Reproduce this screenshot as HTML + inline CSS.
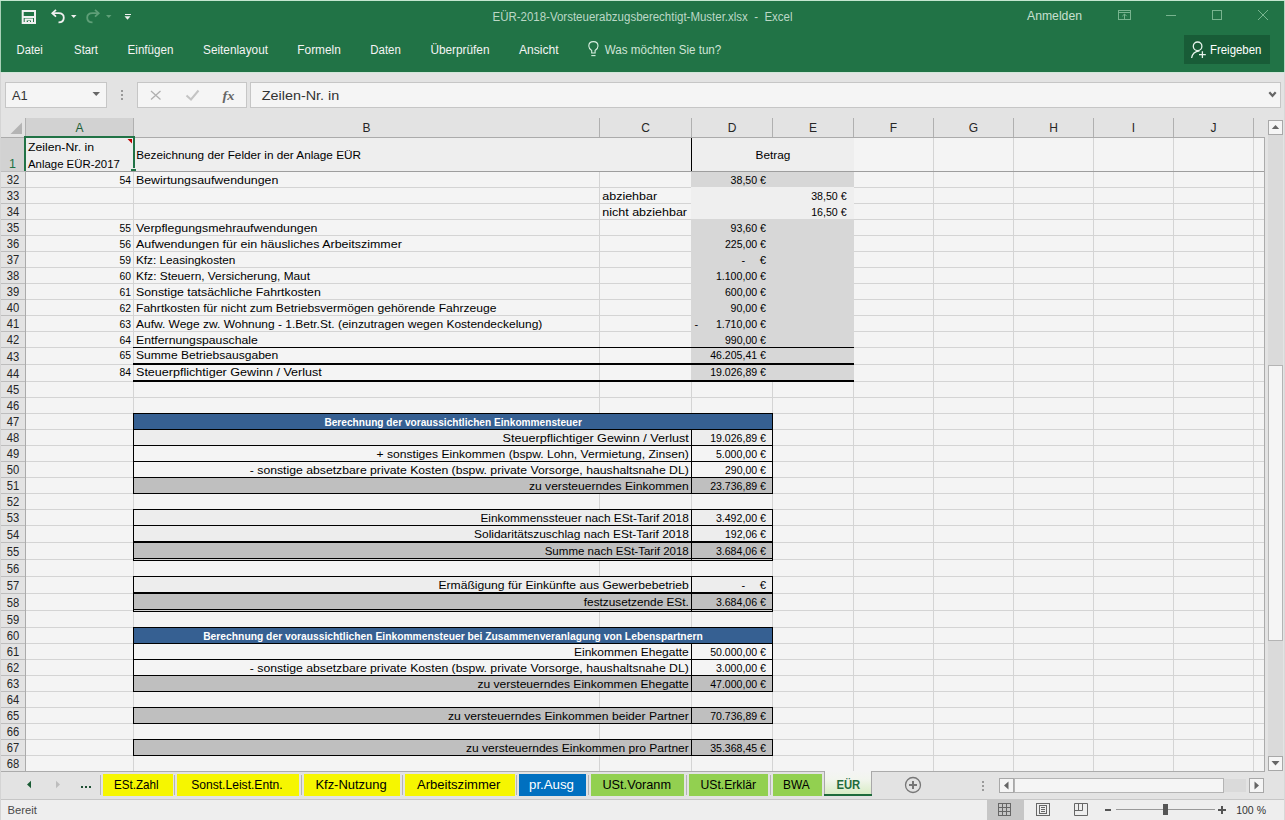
<!DOCTYPE html>
<html><head><meta charset="utf-8"><title>Excel</title>
<style>
html,body{margin:0;padding:0;width:1285px;height:820px;overflow:hidden;background:#e3e3e3;}
svg{display:block;font-family:"Liberation Sans", sans-serif;}
rect{shape-rendering:crispEdges;}
</style></head><body>
<svg width="1285" height="820" viewBox="0 0 1285 820">
<rect x="0" y="0" width="1285" height="820" fill="#e3e3e3" />
<rect x="0" y="0" width="1285" height="72" fill="#217346" />
<text x="492.5" y="21" font-size="12" fill="#bcd8c6" textLength="300" lengthAdjust="spacingAndGlyphs" xml:space="preserve">EÜR-2018-Vorsteuerabzugsberechtigt-Muster.xlsx  -  Excel</text>
<text x="1027" y="20" font-size="12" fill="#c8e0d0" textLength="55" lengthAdjust="spacingAndGlyphs" >Anmelden</text>
<text x="16.6" y="54" font-size="12" fill="#f4f4f4" textLength="26.1" lengthAdjust="spacingAndGlyphs" >Datei</text>
<text x="74.1" y="54" font-size="12" fill="#f4f4f4" textLength="23.9" lengthAdjust="spacingAndGlyphs" >Start</text>
<text x="127.6" y="54" font-size="12" fill="#f4f4f4" textLength="45.8" lengthAdjust="spacingAndGlyphs" >Einfügen</text>
<text x="203" y="54" font-size="12" fill="#f4f4f4" textLength="65" lengthAdjust="spacingAndGlyphs" >Seitenlayout</text>
<text x="297.3" y="54" font-size="12" fill="#f4f4f4" textLength="43.5" lengthAdjust="spacingAndGlyphs" >Formeln</text>
<text x="370.3" y="54" font-size="12" fill="#f4f4f4" textLength="30.5" lengthAdjust="spacingAndGlyphs" >Daten</text>
<text x="430.4" y="54" font-size="12" fill="#f4f4f4" textLength="59.1" lengthAdjust="spacingAndGlyphs" >Überprüfen</text>
<text x="519" y="54" font-size="12" fill="#f4f4f4" textLength="39.7" lengthAdjust="spacingAndGlyphs" >Ansicht</text>
<text x="604.8" y="54" font-size="12" fill="#cfe3d6" textLength="116.5" lengthAdjust="spacingAndGlyphs" >Was möchten Sie tun?</text>
<rect x="1184" y="35" width="86" height="29" fill="#185c37" />
<text x="1210" y="54" font-size="12" fill="#ffffff" textLength="51.4" lengthAdjust="spacingAndGlyphs" >Freigeben</text>
<rect x="0" y="72" width="1285" height="46" fill="#e3e3e3" />
<rect x="0" y="72" width="1285" height="1" fill="#d2e6d9" />
<rect x="5.5" y="82.5" width="101" height="25" fill="#f5f5f5" stroke="#c6c6c6" stroke-width="1"/>
<text x="12" y="100" font-size="12.5" fill="#333333" textLength="15.7" lengthAdjust="spacingAndGlyphs" >A1</text>
<rect x="137.5" y="82.5" width="109" height="25" fill="#f5f5f5" stroke="#c6c6c6" stroke-width="1"/>
<rect x="250.5" y="82.5" width="1030" height="25" fill="#f5f5f5" stroke="#c6c6c6" stroke-width="1"/>
<text x="261.8" y="100" font-size="12.5" fill="#333333" textLength="77.5" lengthAdjust="spacingAndGlyphs" >Zeilen-Nr. in</text>
<rect x="25" y="137" width="1239" height="634" fill="#f4f4f4" />
<rect x="25" y="171" width="1239" height="1" fill="#d4d4d4" />
<rect x="25" y="187" width="1239" height="1" fill="#d4d4d4" />
<rect x="25" y="203" width="1239" height="1" fill="#d4d4d4" />
<rect x="25" y="219" width="1239" height="1" fill="#d4d4d4" />
<rect x="25" y="235" width="1239" height="1" fill="#d4d4d4" />
<rect x="25" y="251" width="1239" height="1" fill="#d4d4d4" />
<rect x="25" y="267" width="1239" height="1" fill="#d4d4d4" />
<rect x="25" y="283" width="1239" height="1" fill="#d4d4d4" />
<rect x="25" y="299" width="1239" height="1" fill="#d4d4d4" />
<rect x="25" y="315" width="1239" height="1" fill="#d4d4d4" />
<rect x="25" y="331" width="1239" height="1" fill="#d4d4d4" />
<rect x="25" y="347" width="1239" height="1" fill="#d4d4d4" />
<rect x="25" y="364" width="1239" height="1" fill="#d4d4d4" />
<rect x="25" y="381" width="1239" height="1" fill="#d4d4d4" />
<rect x="25" y="397" width="1239" height="1" fill="#d4d4d4" />
<rect x="25" y="413" width="1239" height="1" fill="#d4d4d4" />
<rect x="25" y="429" width="1239" height="1" fill="#d4d4d4" />
<rect x="25" y="445" width="1239" height="1" fill="#d4d4d4" />
<rect x="25" y="461" width="1239" height="1" fill="#d4d4d4" />
<rect x="25" y="477" width="1239" height="1" fill="#d4d4d4" />
<rect x="25" y="493" width="1239" height="1" fill="#d4d4d4" />
<rect x="25" y="509" width="1239" height="1" fill="#d4d4d4" />
<rect x="25" y="525" width="1239" height="1" fill="#d4d4d4" />
<rect x="25" y="542" width="1239" height="1" fill="#d4d4d4" />
<rect x="25" y="559" width="1239" height="1" fill="#d4d4d4" />
<rect x="25" y="576" width="1239" height="1" fill="#d4d4d4" />
<rect x="25" y="593" width="1239" height="1" fill="#d4d4d4" />
<rect x="25" y="610" width="1239" height="1" fill="#d4d4d4" />
<rect x="25" y="627" width="1239" height="1" fill="#d4d4d4" />
<rect x="25" y="643" width="1239" height="1" fill="#d4d4d4" />
<rect x="25" y="659" width="1239" height="1" fill="#d4d4d4" />
<rect x="25" y="675" width="1239" height="1" fill="#d4d4d4" />
<rect x="25" y="691" width="1239" height="1" fill="#d4d4d4" />
<rect x="25" y="707" width="1239" height="1" fill="#d4d4d4" />
<rect x="25" y="723" width="1239" height="1" fill="#d4d4d4" />
<rect x="25" y="739" width="1239" height="1" fill="#d4d4d4" />
<rect x="25" y="755" width="1239" height="1" fill="#d4d4d4" />
<rect x="25" y="771" width="1239" height="1" fill="#d4d4d4" />
<rect x="25" y="137" width="1" height="634" fill="#d4d4d4" />
<rect x="133" y="137" width="1" height="634" fill="#d4d4d4" />
<rect x="599" y="137" width="1" height="634" fill="#d4d4d4" />
<rect x="691" y="137" width="1" height="634" fill="#d4d4d4" />
<rect x="772" y="137" width="1" height="634" fill="#d4d4d4" />
<rect x="853" y="137" width="1" height="634" fill="#d4d4d4" />
<rect x="933" y="137" width="1" height="634" fill="#d4d4d4" />
<rect x="1013" y="137" width="1" height="634" fill="#d4d4d4" />
<rect x="1093" y="137" width="1" height="634" fill="#d4d4d4" />
<rect x="1173" y="137" width="1" height="634" fill="#d4d4d4" />
<rect x="1253" y="137" width="1" height="634" fill="#d4d4d4" />
<rect x="25" y="137" width="829" height="34" fill="#eeeeee" />
<rect x="691" y="171" width="163" height="16" fill="#d7d7d7" />
<rect x="691" y="187" width="163" height="32" fill="#efefef" />
<rect x="691" y="219" width="163" height="162" fill="#d7d7d7" />
<rect x="133" y="413" width="640" height="16" fill="#366092" />
<rect x="133" y="429" width="640" height="16" fill="#ededed" />
<rect x="133" y="477" width="640" height="16" fill="#bfbfbf" />
<rect x="133" y="509" width="640" height="33" fill="#ededed" />
<rect x="133" y="542" width="640" height="17" fill="#bfbfbf" />
<rect x="133" y="576" width="640" height="17" fill="#ededed" />
<rect x="133" y="593" width="640" height="17" fill="#bfbfbf" />
<rect x="133" y="445" width="640" height="32" fill="#f4f4f4" />
<rect x="133" y="643" width="640" height="32" fill="#f4f4f4" />
<rect x="133" y="627" width="640" height="16" fill="#366092" />
<rect x="133" y="675" width="640" height="16" fill="#bfbfbf" />
<rect x="133" y="707" width="640" height="16" fill="#bfbfbf" />
<rect x="133" y="739" width="640" height="16" fill="#bfbfbf" />
<rect x="691" y="137" width="1" height="34" fill="#000000" />
<rect x="133" y="347" width="721" height="1" fill="#000000" />
<rect x="133" y="363" width="721" height="2" fill="#000000" />
<rect x="133" y="380" width="721" height="2" fill="#000000" />
<rect x="133" y="413" width="640" height="1" fill="#000000" />
<rect x="133" y="429" width="640" height="1" fill="#000000" />
<rect x="133" y="413" width="1" height="17" fill="#000000" />
<rect x="772" y="413" width="1" height="17" fill="#000000" />
<rect x="133" y="429" width="640" height="1" fill="#000000" />
<rect x="133" y="445" width="640" height="1" fill="#000000" />
<rect x="133" y="429" width="1" height="17" fill="#000000" />
<rect x="772" y="429" width="1" height="17" fill="#000000" />
<rect x="133" y="445" width="640" height="1" fill="#000000" />
<rect x="133" y="461" width="640" height="1" fill="#000000" />
<rect x="133" y="445" width="1" height="17" fill="#000000" />
<rect x="772" y="445" width="1" height="17" fill="#000000" />
<rect x="133" y="461" width="640" height="1" fill="#000000" />
<rect x="133" y="477" width="640" height="1" fill="#000000" />
<rect x="133" y="461" width="1" height="17" fill="#000000" />
<rect x="772" y="461" width="1" height="17" fill="#000000" />
<rect x="133" y="477" width="640" height="1" fill="#000000" />
<rect x="133" y="493" width="640" height="1" fill="#000000" />
<rect x="133" y="477" width="1" height="17" fill="#000000" />
<rect x="772" y="477" width="1" height="17" fill="#000000" />
<rect x="133" y="509" width="640" height="1" fill="#000000" />
<rect x="133" y="525" width="640" height="1" fill="#000000" />
<rect x="133" y="509" width="1" height="17" fill="#000000" />
<rect x="772" y="509" width="1" height="17" fill="#000000" />
<rect x="133" y="525" width="640" height="1" fill="#000000" />
<rect x="133" y="542" width="640" height="1" fill="#000000" />
<rect x="133" y="525" width="1" height="18" fill="#000000" />
<rect x="772" y="525" width="1" height="18" fill="#000000" />
<rect x="133" y="576" width="640" height="1" fill="#000000" />
<rect x="133" y="593" width="640" height="1" fill="#000000" />
<rect x="133" y="576" width="1" height="18" fill="#000000" />
<rect x="772" y="576" width="1" height="18" fill="#000000" />
<rect x="133" y="627" width="640" height="1" fill="#000000" />
<rect x="133" y="643" width="640" height="1" fill="#000000" />
<rect x="133" y="627" width="1" height="17" fill="#000000" />
<rect x="772" y="627" width="1" height="17" fill="#000000" />
<rect x="133" y="643" width="640" height="1" fill="#000000" />
<rect x="133" y="659" width="640" height="1" fill="#000000" />
<rect x="133" y="643" width="1" height="17" fill="#000000" />
<rect x="772" y="643" width="1" height="17" fill="#000000" />
<rect x="133" y="659" width="640" height="1" fill="#000000" />
<rect x="133" y="675" width="640" height="1" fill="#000000" />
<rect x="133" y="659" width="1" height="17" fill="#000000" />
<rect x="772" y="659" width="1" height="17" fill="#000000" />
<rect x="133" y="675" width="640" height="1" fill="#000000" />
<rect x="133" y="691" width="640" height="1" fill="#000000" />
<rect x="133" y="675" width="1" height="17" fill="#000000" />
<rect x="772" y="675" width="1" height="17" fill="#000000" />
<rect x="133" y="707" width="640" height="1" fill="#000000" />
<rect x="133" y="723" width="640" height="1" fill="#000000" />
<rect x="133" y="707" width="1" height="17" fill="#000000" />
<rect x="772" y="707" width="1" height="17" fill="#000000" />
<rect x="133" y="739" width="640" height="1" fill="#000000" />
<rect x="133" y="755" width="640" height="1" fill="#000000" />
<rect x="133" y="739" width="1" height="17" fill="#000000" />
<rect x="772" y="739" width="1" height="17" fill="#000000" />
<rect x="133" y="541" width="640" height="2" fill="#000000" />
<rect x="133" y="558" width="640" height="1" fill="#000000" />
<rect x="133" y="560" width="640" height="1" fill="#000000" />
<rect x="133" y="542" width="1" height="19" fill="#000000" />
<rect x="691" y="542" width="1" height="19" fill="#000000" />
<rect x="772" y="542" width="1" height="19" fill="#000000" />
<rect x="133" y="592" width="640" height="2" fill="#000000" />
<rect x="133" y="609" width="640" height="1" fill="#000000" />
<rect x="133" y="611" width="640" height="1" fill="#000000" />
<rect x="133" y="576" width="1" height="36" fill="#000000" />
<rect x="691" y="576" width="1" height="36" fill="#000000" />
<rect x="772" y="576" width="1" height="36" fill="#000000" />
<rect x="691" y="429" width="1" height="17" fill="#000000" />
<rect x="691" y="445" width="1" height="17" fill="#000000" />
<rect x="691" y="461" width="1" height="17" fill="#000000" />
<rect x="691" y="477" width="1" height="17" fill="#000000" />
<rect x="691" y="509" width="1" height="17" fill="#000000" />
<rect x="691" y="525" width="1" height="18" fill="#000000" />
<rect x="691" y="542" width="1" height="18" fill="#000000" />
<rect x="691" y="576" width="1" height="18" fill="#000000" />
<rect x="691" y="593" width="1" height="18" fill="#000000" />
<rect x="691" y="643" width="1" height="17" fill="#000000" />
<rect x="691" y="659" width="1" height="17" fill="#000000" />
<rect x="691" y="675" width="1" height="17" fill="#000000" />
<rect x="691" y="707" width="1" height="17" fill="#000000" />
<rect x="691" y="739" width="1" height="17" fill="#000000" />
<rect x="0" y="171" width="1264" height="1" fill="#9e9e9e" />
<rect x="0" y="118" width="1264" height="19" fill="#e3e3e3" />
<rect x="25" y="118" width="108" height="19" fill="#d2d2d2" />
<rect x="133" y="118" width="1" height="19" fill="#b0b0b0" />
<rect x="599" y="118" width="1" height="19" fill="#b0b0b0" />
<rect x="691" y="118" width="1" height="19" fill="#b0b0b0" />
<rect x="772" y="118" width="1" height="19" fill="#b0b0b0" />
<rect x="853" y="118" width="1" height="19" fill="#b0b0b0" />
<rect x="933" y="118" width="1" height="19" fill="#b0b0b0" />
<rect x="1013" y="118" width="1" height="19" fill="#b0b0b0" />
<rect x="1093" y="118" width="1" height="19" fill="#b0b0b0" />
<rect x="1173" y="118" width="1" height="19" fill="#b0b0b0" />
<rect x="1253" y="118" width="1" height="19" fill="#b0b0b0" />
<rect x="25" y="118" width="1" height="19" fill="#b0b0b0" />
<rect x="0" y="137" width="1264" height="1" fill="#ababab" />
<polygon points="10.5,134 22,134 22,122.5" fill="#b4b4b4"/>
<rect x="0" y="138" width="25" height="633" fill="#e3e3e3" />
<rect x="0" y="138" width="25" height="33" fill="#d2d2d2" />
<rect x="0" y="171" width="25" height="1" fill="#bdbdbd" />
<rect x="0" y="187" width="25" height="1" fill="#bdbdbd" />
<rect x="0" y="203" width="25" height="1" fill="#bdbdbd" />
<rect x="0" y="219" width="25" height="1" fill="#bdbdbd" />
<rect x="0" y="235" width="25" height="1" fill="#bdbdbd" />
<rect x="0" y="251" width="25" height="1" fill="#bdbdbd" />
<rect x="0" y="267" width="25" height="1" fill="#bdbdbd" />
<rect x="0" y="283" width="25" height="1" fill="#bdbdbd" />
<rect x="0" y="299" width="25" height="1" fill="#bdbdbd" />
<rect x="0" y="315" width="25" height="1" fill="#bdbdbd" />
<rect x="0" y="331" width="25" height="1" fill="#bdbdbd" />
<rect x="0" y="347" width="25" height="1" fill="#bdbdbd" />
<rect x="0" y="364" width="25" height="1" fill="#bdbdbd" />
<rect x="0" y="381" width="25" height="1" fill="#bdbdbd" />
<rect x="0" y="397" width="25" height="1" fill="#bdbdbd" />
<rect x="0" y="413" width="25" height="1" fill="#bdbdbd" />
<rect x="0" y="429" width="25" height="1" fill="#bdbdbd" />
<rect x="0" y="445" width="25" height="1" fill="#bdbdbd" />
<rect x="0" y="461" width="25" height="1" fill="#bdbdbd" />
<rect x="0" y="477" width="25" height="1" fill="#bdbdbd" />
<rect x="0" y="493" width="25" height="1" fill="#bdbdbd" />
<rect x="0" y="509" width="25" height="1" fill="#bdbdbd" />
<rect x="0" y="525" width="25" height="1" fill="#bdbdbd" />
<rect x="0" y="542" width="25" height="1" fill="#bdbdbd" />
<rect x="0" y="559" width="25" height="1" fill="#bdbdbd" />
<rect x="0" y="576" width="25" height="1" fill="#bdbdbd" />
<rect x="0" y="593" width="25" height="1" fill="#bdbdbd" />
<rect x="0" y="610" width="25" height="1" fill="#bdbdbd" />
<rect x="0" y="627" width="25" height="1" fill="#bdbdbd" />
<rect x="0" y="643" width="25" height="1" fill="#bdbdbd" />
<rect x="0" y="659" width="25" height="1" fill="#bdbdbd" />
<rect x="0" y="675" width="25" height="1" fill="#bdbdbd" />
<rect x="0" y="691" width="25" height="1" fill="#bdbdbd" />
<rect x="0" y="707" width="25" height="1" fill="#bdbdbd" />
<rect x="0" y="723" width="25" height="1" fill="#bdbdbd" />
<rect x="0" y="739" width="25" height="1" fill="#bdbdbd" />
<rect x="0" y="755" width="25" height="1" fill="#bdbdbd" />
<rect x="0" y="771" width="25" height="1" fill="#bdbdbd" />
<rect x="25" y="137" width="1" height="634" fill="#ababab" />
<text x="79.5" y="132" font-size="12" fill="#1d6038" text-anchor="middle" >A</text>
<text x="366.5" y="132" font-size="12" fill="#262626" text-anchor="middle" >B</text>
<text x="645.5" y="132" font-size="12" fill="#262626" text-anchor="middle" >C</text>
<text x="732.0" y="132" font-size="12" fill="#262626" text-anchor="middle" >D</text>
<text x="813.0" y="132" font-size="12" fill="#262626" text-anchor="middle" >E</text>
<text x="893.5" y="132" font-size="12" fill="#262626" text-anchor="middle" >F</text>
<text x="973.5" y="132" font-size="12" fill="#262626" text-anchor="middle" >G</text>
<text x="1053.5" y="132" font-size="12" fill="#262626" text-anchor="middle" >H</text>
<text x="1133.5" y="132" font-size="12" fill="#262626" text-anchor="middle" >I</text>
<text x="1213.5" y="132" font-size="12" fill="#262626" text-anchor="middle" >J</text>
<text x="12.5" y="167.8" font-size="12.5" fill="#217346" text-anchor="middle" >1</text>
<text x="13" y="183.8" font-size="12.5" fill="#262626" textLength="12.5" lengthAdjust="spacingAndGlyphs" text-anchor="middle" >32</text>
<text x="13" y="199.8" font-size="12.5" fill="#262626" textLength="12.5" lengthAdjust="spacingAndGlyphs" text-anchor="middle" >33</text>
<text x="13" y="215.8" font-size="12.5" fill="#262626" textLength="12.5" lengthAdjust="spacingAndGlyphs" text-anchor="middle" >34</text>
<text x="13" y="231.8" font-size="12.5" fill="#262626" textLength="12.5" lengthAdjust="spacingAndGlyphs" text-anchor="middle" >35</text>
<text x="13" y="247.8" font-size="12.5" fill="#262626" textLength="12.5" lengthAdjust="spacingAndGlyphs" text-anchor="middle" >36</text>
<text x="13" y="263.8" font-size="12.5" fill="#262626" textLength="12.5" lengthAdjust="spacingAndGlyphs" text-anchor="middle" >37</text>
<text x="13" y="279.8" font-size="12.5" fill="#262626" textLength="12.5" lengthAdjust="spacingAndGlyphs" text-anchor="middle" >38</text>
<text x="13" y="295.8" font-size="12.5" fill="#262626" textLength="12.5" lengthAdjust="spacingAndGlyphs" text-anchor="middle" >39</text>
<text x="13" y="311.8" font-size="12.5" fill="#262626" textLength="12.5" lengthAdjust="spacingAndGlyphs" text-anchor="middle" >40</text>
<text x="13" y="327.8" font-size="12.5" fill="#262626" textLength="12.5" lengthAdjust="spacingAndGlyphs" text-anchor="middle" >41</text>
<text x="13" y="343.8" font-size="12.5" fill="#262626" textLength="12.5" lengthAdjust="spacingAndGlyphs" text-anchor="middle" >42</text>
<text x="13" y="360.8" font-size="12.5" fill="#262626" textLength="12.5" lengthAdjust="spacingAndGlyphs" text-anchor="middle" >43</text>
<text x="13" y="377.8" font-size="12.5" fill="#262626" textLength="12.5" lengthAdjust="spacingAndGlyphs" text-anchor="middle" >44</text>
<text x="13" y="393.8" font-size="12.5" fill="#262626" textLength="12.5" lengthAdjust="spacingAndGlyphs" text-anchor="middle" >45</text>
<text x="13" y="409.8" font-size="12.5" fill="#262626" textLength="12.5" lengthAdjust="spacingAndGlyphs" text-anchor="middle" >46</text>
<text x="13" y="425.8" font-size="12.5" fill="#262626" textLength="12.5" lengthAdjust="spacingAndGlyphs" text-anchor="middle" >47</text>
<text x="13" y="441.8" font-size="12.5" fill="#262626" textLength="12.5" lengthAdjust="spacingAndGlyphs" text-anchor="middle" >48</text>
<text x="13" y="457.8" font-size="12.5" fill="#262626" textLength="12.5" lengthAdjust="spacingAndGlyphs" text-anchor="middle" >49</text>
<text x="13" y="473.8" font-size="12.5" fill="#262626" textLength="12.5" lengthAdjust="spacingAndGlyphs" text-anchor="middle" >50</text>
<text x="13" y="489.8" font-size="12.5" fill="#262626" textLength="12.5" lengthAdjust="spacingAndGlyphs" text-anchor="middle" >51</text>
<text x="13" y="505.8" font-size="12.5" fill="#262626" textLength="12.5" lengthAdjust="spacingAndGlyphs" text-anchor="middle" >52</text>
<text x="13" y="521.8" font-size="12.5" fill="#262626" textLength="12.5" lengthAdjust="spacingAndGlyphs" text-anchor="middle" >53</text>
<text x="13" y="538.8" font-size="12.5" fill="#262626" textLength="12.5" lengthAdjust="spacingAndGlyphs" text-anchor="middle" >54</text>
<text x="13" y="555.8" font-size="12.5" fill="#262626" textLength="12.5" lengthAdjust="spacingAndGlyphs" text-anchor="middle" >55</text>
<text x="13" y="572.8" font-size="12.5" fill="#262626" textLength="12.5" lengthAdjust="spacingAndGlyphs" text-anchor="middle" >56</text>
<text x="13" y="589.8" font-size="12.5" fill="#262626" textLength="12.5" lengthAdjust="spacingAndGlyphs" text-anchor="middle" >57</text>
<text x="13" y="606.8" font-size="12.5" fill="#262626" textLength="12.5" lengthAdjust="spacingAndGlyphs" text-anchor="middle" >58</text>
<text x="13" y="623.8" font-size="12.5" fill="#262626" textLength="12.5" lengthAdjust="spacingAndGlyphs" text-anchor="middle" >59</text>
<text x="13" y="639.8" font-size="12.5" fill="#262626" textLength="12.5" lengthAdjust="spacingAndGlyphs" text-anchor="middle" >60</text>
<text x="13" y="655.8" font-size="12.5" fill="#262626" textLength="12.5" lengthAdjust="spacingAndGlyphs" text-anchor="middle" >61</text>
<text x="13" y="671.8" font-size="12.5" fill="#262626" textLength="12.5" lengthAdjust="spacingAndGlyphs" text-anchor="middle" >62</text>
<text x="13" y="687.8" font-size="12.5" fill="#262626" textLength="12.5" lengthAdjust="spacingAndGlyphs" text-anchor="middle" >63</text>
<text x="13" y="703.8" font-size="12.5" fill="#262626" textLength="12.5" lengthAdjust="spacingAndGlyphs" text-anchor="middle" >64</text>
<text x="13" y="719.8" font-size="12.5" fill="#262626" textLength="12.5" lengthAdjust="spacingAndGlyphs" text-anchor="middle" >65</text>
<text x="13" y="735.8" font-size="12.5" fill="#262626" textLength="12.5" lengthAdjust="spacingAndGlyphs" text-anchor="middle" >66</text>
<text x="13" y="751.8" font-size="12.5" fill="#262626" textLength="12.5" lengthAdjust="spacingAndGlyphs" text-anchor="middle" >67</text>
<text x="13" y="767.8" font-size="12.5" fill="#262626" textLength="12.5" lengthAdjust="spacingAndGlyphs" text-anchor="middle" >68</text>
<text x="28" y="150.6" font-size="11" fill="#000000" textLength="66" lengthAdjust="spacingAndGlyphs" >Zeilen-Nr. in</text>
<text x="28" y="167.7" font-size="11" fill="#000000" textLength="91.8" lengthAdjust="spacingAndGlyphs" >Anlage EÜR-2017</text>
<text x="136.2" y="158.7" font-size="11" fill="#000000" textLength="224.8" lengthAdjust="spacingAndGlyphs" >Bezeichnung der Felder in der Anlage EÜR</text>
<text x="755.5" y="159.2" font-size="11" fill="#000000" textLength="34.8" lengthAdjust="spacingAndGlyphs" >Betrag</text>
<text x="131" y="183.6" font-size="11" fill="#000000" textLength="11.5" lengthAdjust="spacingAndGlyphs" text-anchor="end" >54</text>
<text x="136" y="183.6" font-size="11" fill="#000000" textLength="142.3" lengthAdjust="spacingAndGlyphs" >Bewirtungsaufwendungen</text>
<text x="766" y="183.6" font-size="11" fill="#000000" textLength="35.4" lengthAdjust="spacingAndGlyphs" text-anchor="end" >38,50 €</text>
<text x="131" y="231.6" font-size="11" fill="#000000" textLength="11.5" lengthAdjust="spacingAndGlyphs" text-anchor="end" >55</text>
<text x="136" y="231.6" font-size="11" fill="#000000" textLength="181.4" lengthAdjust="spacingAndGlyphs" >Verpflegungsmehraufwendungen</text>
<text x="766" y="231.6" font-size="11" fill="#000000" textLength="35.4" lengthAdjust="spacingAndGlyphs" text-anchor="end" >93,60 €</text>
<text x="131" y="247.6" font-size="11" fill="#000000" textLength="11.5" lengthAdjust="spacingAndGlyphs" text-anchor="end" >56</text>
<text x="136" y="247.6" font-size="11" fill="#000000" textLength="265.8" lengthAdjust="spacingAndGlyphs" >Aufwendungen für ein häusliches Arbeitszimmer</text>
<text x="766" y="247.6" font-size="11" fill="#000000" textLength="41.1" lengthAdjust="spacingAndGlyphs" text-anchor="end" >225,00 €</text>
<text x="131" y="263.6" font-size="11" fill="#000000" textLength="11.5" lengthAdjust="spacingAndGlyphs" text-anchor="end" >59</text>
<text x="136" y="263.6" font-size="11" fill="#000000" textLength="99.4" lengthAdjust="spacingAndGlyphs" >Kfz: Leasingkosten</text>
<text x="741.6" y="263.6" font-size="11" fill="#000000" >-</text>
<text x="766" y="263.6" font-size="11" fill="#000000" textLength="6.3" lengthAdjust="spacingAndGlyphs" text-anchor="end" >€</text>
<text x="131" y="279.6" font-size="11" fill="#000000" textLength="11.5" lengthAdjust="spacingAndGlyphs" text-anchor="end" >60</text>
<text x="136" y="279.6" font-size="11" fill="#000000" textLength="174" lengthAdjust="spacingAndGlyphs" >Kfz: Steuern, Versicherung, Maut</text>
<text x="766" y="279.6" font-size="11" fill="#000000" textLength="50.1" lengthAdjust="spacingAndGlyphs" text-anchor="end" >1.100,00 €</text>
<text x="131" y="295.6" font-size="11" fill="#000000" textLength="11.5" lengthAdjust="spacingAndGlyphs" text-anchor="end" >61</text>
<text x="136" y="295.6" font-size="11" fill="#000000" textLength="184.8" lengthAdjust="spacingAndGlyphs" >Sonstige tatsächliche Fahrtkosten</text>
<text x="766" y="295.6" font-size="11" fill="#000000" textLength="41.1" lengthAdjust="spacingAndGlyphs" text-anchor="end" >600,00 €</text>
<text x="131" y="311.6" font-size="11" fill="#000000" textLength="11.5" lengthAdjust="spacingAndGlyphs" text-anchor="end" >62</text>
<text x="136" y="311.6" font-size="11" fill="#000000" textLength="360.5" lengthAdjust="spacingAndGlyphs" >Fahrtkosten für nicht zum Betriebsvermögen gehörende Fahrzeuge</text>
<text x="766" y="311.6" font-size="11" fill="#000000" textLength="35.4" lengthAdjust="spacingAndGlyphs" text-anchor="end" >90,00 €</text>
<text x="131" y="327.6" font-size="11" fill="#000000" textLength="11.5" lengthAdjust="spacingAndGlyphs" text-anchor="end" >63</text>
<text x="136" y="327.6" font-size="11" fill="#000000" textLength="406.3" lengthAdjust="spacingAndGlyphs" >Aufw. Wege zw. Wohnung - 1.Betr.St. (einzutragen wegen Kostendeckelung)</text>
<text x="766" y="327.6" font-size="11" fill="#000000" textLength="50.1" lengthAdjust="spacingAndGlyphs" text-anchor="end" >1.710,00 €</text>
<text x="131" y="343.6" font-size="11" fill="#000000" textLength="11.5" lengthAdjust="spacingAndGlyphs" text-anchor="end" >64</text>
<text x="136" y="343.6" font-size="11" fill="#000000" textLength="121.8" lengthAdjust="spacingAndGlyphs" >Entfernungspauschale</text>
<text x="766" y="343.6" font-size="11" fill="#000000" textLength="41.1" lengthAdjust="spacingAndGlyphs" text-anchor="end" >990,00 €</text>
<text x="131" y="359" font-size="11" fill="#000000" textLength="11.5" lengthAdjust="spacingAndGlyphs" text-anchor="end" >65</text>
<text x="136" y="359" font-size="11" fill="#000000" textLength="142.3" lengthAdjust="spacingAndGlyphs" >Summe Betriebsausgaben</text>
<text x="766" y="359" font-size="11" fill="#000000" textLength="55.8" lengthAdjust="spacingAndGlyphs" text-anchor="end" >46.205,41 €</text>
<text x="131" y="376" font-size="11" fill="#000000" textLength="11.5" lengthAdjust="spacingAndGlyphs" text-anchor="end" >84</text>
<text x="136" y="376" font-size="11" fill="#000000" textLength="185.8" lengthAdjust="spacingAndGlyphs" >Steuerpflichtiger Gewinn / Verlust</text>
<text x="766" y="376" font-size="11" fill="#000000" textLength="55.8" lengthAdjust="spacingAndGlyphs" text-anchor="end" >19.026,89 €</text>
<text x="694.4" y="327.6" font-size="11" fill="#000000" >-</text>
<text x="602.3" y="199.6" font-size="11" fill="#000000" textLength="54.8" lengthAdjust="spacingAndGlyphs" >abziehbar</text>
<text x="602.3" y="215.6" font-size="11" fill="#000000" textLength="84.7" lengthAdjust="spacingAndGlyphs" >nicht abziehbar</text>
<text x="846.6" y="199.6" font-size="11" fill="#000000" textLength="35.4" lengthAdjust="spacingAndGlyphs" text-anchor="end" >38,50 €</text>
<text x="846.6" y="215.6" font-size="11" fill="#000000" textLength="35.4" lengthAdjust="spacingAndGlyphs" text-anchor="end" >16,50 €</text>
<text x="324.4" y="426" font-size="11" fill="#ffffff" textLength="257.5" lengthAdjust="spacingAndGlyphs" font-weight="bold" >Berechnung der voraussichtlichen Einkommensteuer</text>
<text x="203.2" y="639.7" font-size="11" fill="#ffffff" textLength="499.5" lengthAdjust="spacingAndGlyphs" font-weight="bold" >Berechnung der voraussichtlichen Einkommensteuer bei Zusammenveranlagung von Lebenspartnern</text>
<text x="688.8" y="441.6" font-size="11" fill="#000000" textLength="186.2" lengthAdjust="spacingAndGlyphs" text-anchor="end" >Steuerpflichtiger Gewinn / Verlust</text>
<text x="766" y="441.6" font-size="11" fill="#000000" textLength="55.8" lengthAdjust="spacingAndGlyphs" text-anchor="end" >19.026,89 €</text>
<text x="688.8" y="457.6" font-size="11" fill="#000000" textLength="312.2" lengthAdjust="spacingAndGlyphs" text-anchor="end" >+ sonstiges Einkommen (bspw. Lohn, Vermietung, Zinsen)</text>
<text x="766" y="457.6" font-size="11" fill="#000000" textLength="50.1" lengthAdjust="spacingAndGlyphs" text-anchor="end" >5.000,00 €</text>
<text x="688.8" y="473.6" font-size="11" fill="#000000" textLength="439" lengthAdjust="spacingAndGlyphs" text-anchor="end" >- sonstige absetzbare private Kosten (bspw. private Vorsorge, haushaltsnahe DL)</text>
<text x="766" y="473.6" font-size="11" fill="#000000" textLength="41.1" lengthAdjust="spacingAndGlyphs" text-anchor="end" >290,00 €</text>
<text x="688.8" y="489.6" font-size="11" fill="#000000" textLength="159.8" lengthAdjust="spacingAndGlyphs" text-anchor="end" >zu versteuerndes Einkommen</text>
<text x="766" y="489.6" font-size="11" fill="#000000" textLength="55.8" lengthAdjust="spacingAndGlyphs" text-anchor="end" >23.736,89 €</text>
<text x="688.8" y="521.6" font-size="11" fill="#000000" textLength="208.4" lengthAdjust="spacingAndGlyphs" text-anchor="end" >Einkommenssteuer nach ESt-Tarif 2018</text>
<text x="766" y="521.6" font-size="11" fill="#000000" textLength="50.1" lengthAdjust="spacingAndGlyphs" text-anchor="end" >3.492,00 €</text>
<text x="688.8" y="538" font-size="11" fill="#000000" textLength="214.8" lengthAdjust="spacingAndGlyphs" text-anchor="end" >Solidaritätszuschlag nach ESt-Tarif 2018</text>
<text x="766" y="538" font-size="11" fill="#000000" textLength="41.1" lengthAdjust="spacingAndGlyphs" text-anchor="end" >192,06 €</text>
<text x="688.8" y="555" font-size="11" fill="#000000" textLength="144.1" lengthAdjust="spacingAndGlyphs" text-anchor="end" >Summe nach ESt-Tarif 2018</text>
<text x="766" y="555" font-size="11" fill="#000000" textLength="50.1" lengthAdjust="spacingAndGlyphs" text-anchor="end" >3.684,06 €</text>
<text x="688.8" y="589" font-size="11" fill="#000000" textLength="250.4" lengthAdjust="spacingAndGlyphs" text-anchor="end" >Ermäßigung für Einkünfte aus Gewerbebetrieb</text>
<text x="741.6" y="589" font-size="11" fill="#000000" >-</text>
<text x="766" y="589" font-size="11" fill="#000000" textLength="6.3" lengthAdjust="spacingAndGlyphs" text-anchor="end" >€</text>
<text x="688.8" y="606" font-size="11" fill="#000000" textLength="105" lengthAdjust="spacingAndGlyphs" text-anchor="end" >festzusetzende ESt.</text>
<text x="766" y="606" font-size="11" fill="#000000" textLength="50.1" lengthAdjust="spacingAndGlyphs" text-anchor="end" >3.684,06 €</text>
<text x="688.8" y="655.6" font-size="11" fill="#000000" textLength="114.8" lengthAdjust="spacingAndGlyphs" text-anchor="end" >Einkommen Ehegatte</text>
<text x="766" y="655.6" font-size="11" fill="#000000" textLength="55.8" lengthAdjust="spacingAndGlyphs" text-anchor="end" >50.000,00 €</text>
<text x="688.8" y="671.6" font-size="11" fill="#000000" textLength="439" lengthAdjust="spacingAndGlyphs" text-anchor="end" >- sonstige absetzbare private Kosten (bspw. private Vorsorge, haushaltsnahe DL)</text>
<text x="766" y="671.6" font-size="11" fill="#000000" textLength="50.1" lengthAdjust="spacingAndGlyphs" text-anchor="end" >3.000,00 €</text>
<text x="688.8" y="687.6" font-size="11" fill="#000000" textLength="211.4" lengthAdjust="spacingAndGlyphs" text-anchor="end" >zu versteuerndes Einkommen Ehegatte</text>
<text x="766" y="687.6" font-size="11" fill="#000000" textLength="55.8" lengthAdjust="spacingAndGlyphs" text-anchor="end" >47.000,00 €</text>
<text x="688.8" y="719.6" font-size="11" fill="#000000" textLength="240.8" lengthAdjust="spacingAndGlyphs" text-anchor="end" >zu versteuerndes Einkommen beider Partner</text>
<text x="766" y="719.6" font-size="11" fill="#000000" textLength="55.8" lengthAdjust="spacingAndGlyphs" text-anchor="end" >70.736,89 €</text>
<text x="688.8" y="751.6" font-size="11" fill="#000000" textLength="222.8" lengthAdjust="spacingAndGlyphs" text-anchor="end" >zu versteuerndes Einkommen pro Partner</text>
<text x="766" y="751.6" font-size="11" fill="#000000" textLength="55.8" lengthAdjust="spacingAndGlyphs" text-anchor="end" >35.368,45 €</text>
<rect x="24" y="136" width="111" height="2" fill="#217346" />
<rect x="24" y="136" width="2" height="35" fill="#217346" />
<rect x="133" y="136" width="2" height="32" fill="#217346" />
<rect x="131" y="169" width="5" height="2" fill="#217346" />
<polygon points="127.5,139 132,139 132,143.5" fill="#c00000"/>
<rect x="1264" y="137" width="1" height="635" fill="#ababab" />
<rect x="0" y="771" width="1265" height="1" fill="#ababab" />
<rect x="1265" y="118" width="20" height="654" fill="#e3e3e3" />
<rect x="1268" y="135" width="15" height="621" fill="#dadada" />
<rect x="1268.5" y="120.5" width="14" height="14" fill="#f5f5f5" stroke="#a8a8a8"/>
<polygon points="1271.8,129 1279.2,129 1275.5,125" fill="#666"/>
<rect x="1268.5" y="756.5" width="14" height="14" fill="#f5f5f5" stroke="#a8a8a8"/>
<polygon points="1271.5,761 1279.5,761 1275.5,765.5" fill="#666"/>
<rect x="1268.5" y="365.5" width="14" height="275" fill="#f5f5f5" stroke="#b4b4b4"/>
<rect x="0" y="772" width="1285" height="27" fill="#e3e3e3" />
<polygon points="31,780.8 31,788.2 27,784.5" fill="#1a5c35"/>
<polygon points="56,780.8 56,788.2 60,784.5" fill="#bdbdbd"/>
<rect x="81" y="786" width="2" height="2" fill="#1e4f33" />
<rect x="85" y="786" width="2" height="2" fill="#1e4f33" />
<rect x="89" y="786" width="2" height="2" fill="#1e4f33" />
<rect x="103" y="774" width="70" height="22" fill="#f6f600" />
<text x="114" y="788.8" font-size="13" fill="#000" textLength="44.6" lengthAdjust="spacingAndGlyphs" >ESt.Zahl</text>
<rect x="177" y="774" width="122" height="22" fill="#f6f600" />
<text x="191.2" y="788.8" font-size="13" fill="#000" textLength="91.4" lengthAdjust="spacingAndGlyphs" >Sonst.Leist.Entn.</text>
<rect x="304" y="774" width="96" height="22" fill="#f6f600" />
<text x="315.4" y="788.8" font-size="13" fill="#000" textLength="71.3" lengthAdjust="spacingAndGlyphs" >Kfz-Nutzung</text>
<rect x="405" y="774" width="110" height="22" fill="#f6f600" />
<text x="417" y="788.8" font-size="13" fill="#000" textLength="83.4" lengthAdjust="spacingAndGlyphs" >Arbeitszimmer</text>
<rect x="519" y="774" width="67" height="22" fill="#0070c0" />
<text x="529" y="788.8" font-size="13" fill="#fff" textLength="45" lengthAdjust="spacingAndGlyphs" >pr.Ausg</text>
<rect x="591" y="774" width="93" height="22" fill="#92d050" />
<text x="602.4" y="788.8" font-size="13" fill="#000" textLength="68.6" lengthAdjust="spacingAndGlyphs" >USt.Voranm</text>
<rect x="689" y="774" width="79" height="22" fill="#92d050" />
<text x="700.5" y="788.8" font-size="13" fill="#000" textLength="55.5" lengthAdjust="spacingAndGlyphs" >USt.Erklär</text>
<rect x="773" y="774" width="49" height="22" fill="#92d050" />
<text x="783" y="788.8" font-size="13" fill="#000" textLength="26.7" lengthAdjust="spacingAndGlyphs" >BWA</text>
<rect x="100" y="775" width="1" height="20" fill="#b4b4b4" />
<rect x="174" y="775" width="1" height="20" fill="#b4b4b4" />
<rect x="301" y="775" width="1" height="20" fill="#b4b4b4" />
<rect x="402" y="775" width="1" height="20" fill="#b4b4b4" />
<rect x="516" y="775" width="1" height="20" fill="#b4b4b4" />
<rect x="588" y="775" width="1" height="20" fill="#b4b4b4" />
<rect x="686" y="775" width="1" height="20" fill="#b4b4b4" />
<rect x="770" y="775" width="1" height="20" fill="#b4b4b4" />
<rect x="824" y="771" width="48" height="24" fill="#f4f4f4" />
<defs><linearGradient id="ag" x1="0" y1="0" x2="0" y2="1"><stop offset="0" stop-color="#f4f4f4"/><stop offset="0.35" stop-color="#f2f5ee"/><stop offset="1" stop-color="#d9ecc6"/></linearGradient></defs>
<rect x="825" y="771" width="46" height="23" fill="url(#ag)" />
<rect x="824" y="771" width="1" height="25" fill="#a8a8a8" />
<rect x="871" y="771" width="1" height="25" fill="#a8a8a8" />
<rect x="824" y="794" width="48" height="2" fill="#1e6b3c" />
<text x="836.4" y="788.8" font-size="13" fill="#1e6b3c" textLength="23.8" lengthAdjust="spacingAndGlyphs" font-weight="bold" >EÜR</text>
<circle cx="913" cy="785" r="7.5" fill="none" stroke="#777" stroke-width="1.3"/>
<rect x="909" y="784.4" width="8" height="1.3" fill="#777" />
<rect x="912.35" y="781" width="1.3" height="8" fill="#777" />
<rect x="982" y="781" width="2" height="2" fill="#9a9a9a" />
<rect x="982" y="785" width="2" height="2" fill="#9a9a9a" />
<rect x="982" y="789" width="2" height="2" fill="#9a9a9a" />
<rect x="999.5" y="778.5" width="14" height="14" fill="#f5f5f5" stroke="#a8a8a8"/>
<polygon points="1008.5,781.5 1008.5,789.5 1004,785.5" fill="#666"/>
<rect x="1014" y="779" width="232" height="13" fill="#dadada" />
<rect x="1014.5" y="778.5" width="209" height="14" fill="#f5f5f5" stroke="#b4b4b4"/>
<rect x="1249.5" y="778.5" width="14" height="14" fill="#f5f5f5" stroke="#a8a8a8"/>
<polygon points="1254.5,781.5 1254.5,789.5 1259,785.5" fill="#666"/>
<rect x="0" y="799" width="1285" height="21" fill="#eeeeee" />
<rect x="0" y="799" width="1285" height="1" fill="#c6c6c6" />
<text x="7.5" y="813.8" font-size="11" fill="#4a4a4a" textLength="29.4" lengthAdjust="spacingAndGlyphs" >Bereit</text>
<rect x="987" y="800" width="37" height="20" fill="#c6c6c6" />
<g fill="none" stroke="#666" stroke-width="1">
<rect x="998.5" y="803.5" width="12" height="12"/>
<path d="M1002.5 803.5V815.5M1006.5 803.5V815.5M998.5 807.5H1010.5M998.5 811.5H1010.5"/>
<rect x="1036.5" y="803.5" width="13" height="12"/>
<rect x="1039.5" y="805.5" width="7" height="8"/>
<path d="M1041 807.5H1045M1041 809.5H1045M1041 811.5H1045"/>
<path d="M1074.5 803.5H1087.5V815.5H1074.5Z M1074.5 810.5H1082.5V803.5 M1078.5 810.5V803.5"/>
</g>
<rect x="1105" y="809" width="6" height="2" fill="#555" />
<rect x="1116" y="809" width="99" height="1" fill="#999" />
<rect x="1163" y="804" width="4.5" height="11" fill="#555" />
<rect x="1218" y="809" width="8" height="2" fill="#555" />
<rect x="1221" y="806" width="2" height="8" fill="#555" />
<text x="1236.2" y="813.6" font-size="11" fill="#333333" textLength="29.8" lengthAdjust="spacingAndGlyphs" >100 %</text>
<g fill="none" stroke="#f0f0f0" stroke-width="2">
<path d="M22.7 10.9H35V23H22.7Z"/>
<path d="M22.7 17H35"/>
<path d="M25.7 23V19.6H32V23"/>
</g>
<rect x="27.5" y="20.5" width="2" height="2.5" fill="#f0f0f0" />
<path d="M52.5 13.2H58.5Q63.8 13.2 63.8 17.8Q63.8 22.4 58.5 22.4" fill="none" stroke="#f0f0f0" stroke-width="1.8"/>
<path d="M56 9.8L52.3 13.2L56 16.6" fill="none" stroke="#f0f0f0" stroke-width="1.8"/>
<polygon points="71,15 76.5,15 73.75,18" fill="#f0f0f0"/>
<path d="M98.5 13.2H92.5Q87.2 13.2 87.2 17.8Q87.2 22.4 92.5 22.4" fill="none" stroke="#5f9f78" stroke-width="1.8"/>
<path d="M95 9.8L98.7 13.2L95 16.6" fill="none" stroke="#5f9f78" stroke-width="1.8"/>
<polygon points="106,15 111.5,15 108.75,18" fill="#5f9f78"/>
<rect x="124.5" y="13.5" width="6" height="1.2" fill="#f0f0f0" />
<polygon points="124.5,16.2 130.5,16.2 127.5,19.8" fill="#f0f0f0"/>
<g fill="none" stroke="#78b48f" stroke-width="1">
<rect x="1118.5" y="10.5" width="12" height="9"/>
<path d="M1118.5 12.5H1130.5M1124.5 19.5V14M1122.3 16.2L1124.5 14L1126.7 16.2"/>
<path d="M1166 15.5H1176"/>
<rect x="1212.5" y="10.5" width="9" height="9"/>
<path d="M1258 10L1268 20M1268 10L1258 20"/>
</g>
<g fill="none" stroke="#e8f4ec" stroke-width="1.3">
<circle cx="1197.6" cy="46.3" r="4.3"/>
<path d="M1191.6 58Q1192.5 51.5 1199.5 50.8"/>
<path d="M1199 54.6H1205.8M1202.4 51.2V58"/>
</g>
<g fill="none" stroke="#d8efe0" stroke-width="1.1">
<path d="M591.7 53V50.5Q588.8 48.6 588.8 46Q588.8 41.6 593.4 41.6Q598 41.6 598 46Q598 48.6 595.1 50.5V53Z"/>
<path d="M591.3 55.6H595.5"/>
</g>
<path d="M151 91L160.5 99.5M160.5 91L151 99.5" stroke="#b0b0b0" stroke-width="1.3" fill="none"/>
<path d="M186.5 95.5L191 99.5L198.5 90.5" stroke="#c4c4c4" stroke-width="2" fill="none"/>
<text x="222.5" y="99.5" font-family="Liberation Serif" font-style="italic" font-weight="bold" font-size="13" fill="#666" textLength="12" lengthAdjust="spacingAndGlyphs">fx</text>
<polygon points="92.5,92 100,92 96.25,96" fill="#666"/>
<rect x="121" y="90" width="2" height="2" fill="#999" />
<rect x="121" y="94" width="2" height="2" fill="#999" />
<rect x="121" y="98" width="2" height="2" fill="#999" />
<path d="M1269.3 92.3L1272.5 95.8L1275.7 92.3" stroke="#666" stroke-width="2.2" fill="none"/>
<rect x="0" y="0" width="1285" height="1" fill="#c4e6d0" />
<rect x="0" y="1" width="1" height="71" fill="#a9d0b7" />
<rect x="0" y="72" width="1" height="748" fill="#d4d4d4" />
<rect x="1284" y="1" width="1" height="71" fill="#b5d5c0" />
<rect x="1284" y="72" width="1" height="748" fill="#d8d8d8" />
</svg>
</body></html>
